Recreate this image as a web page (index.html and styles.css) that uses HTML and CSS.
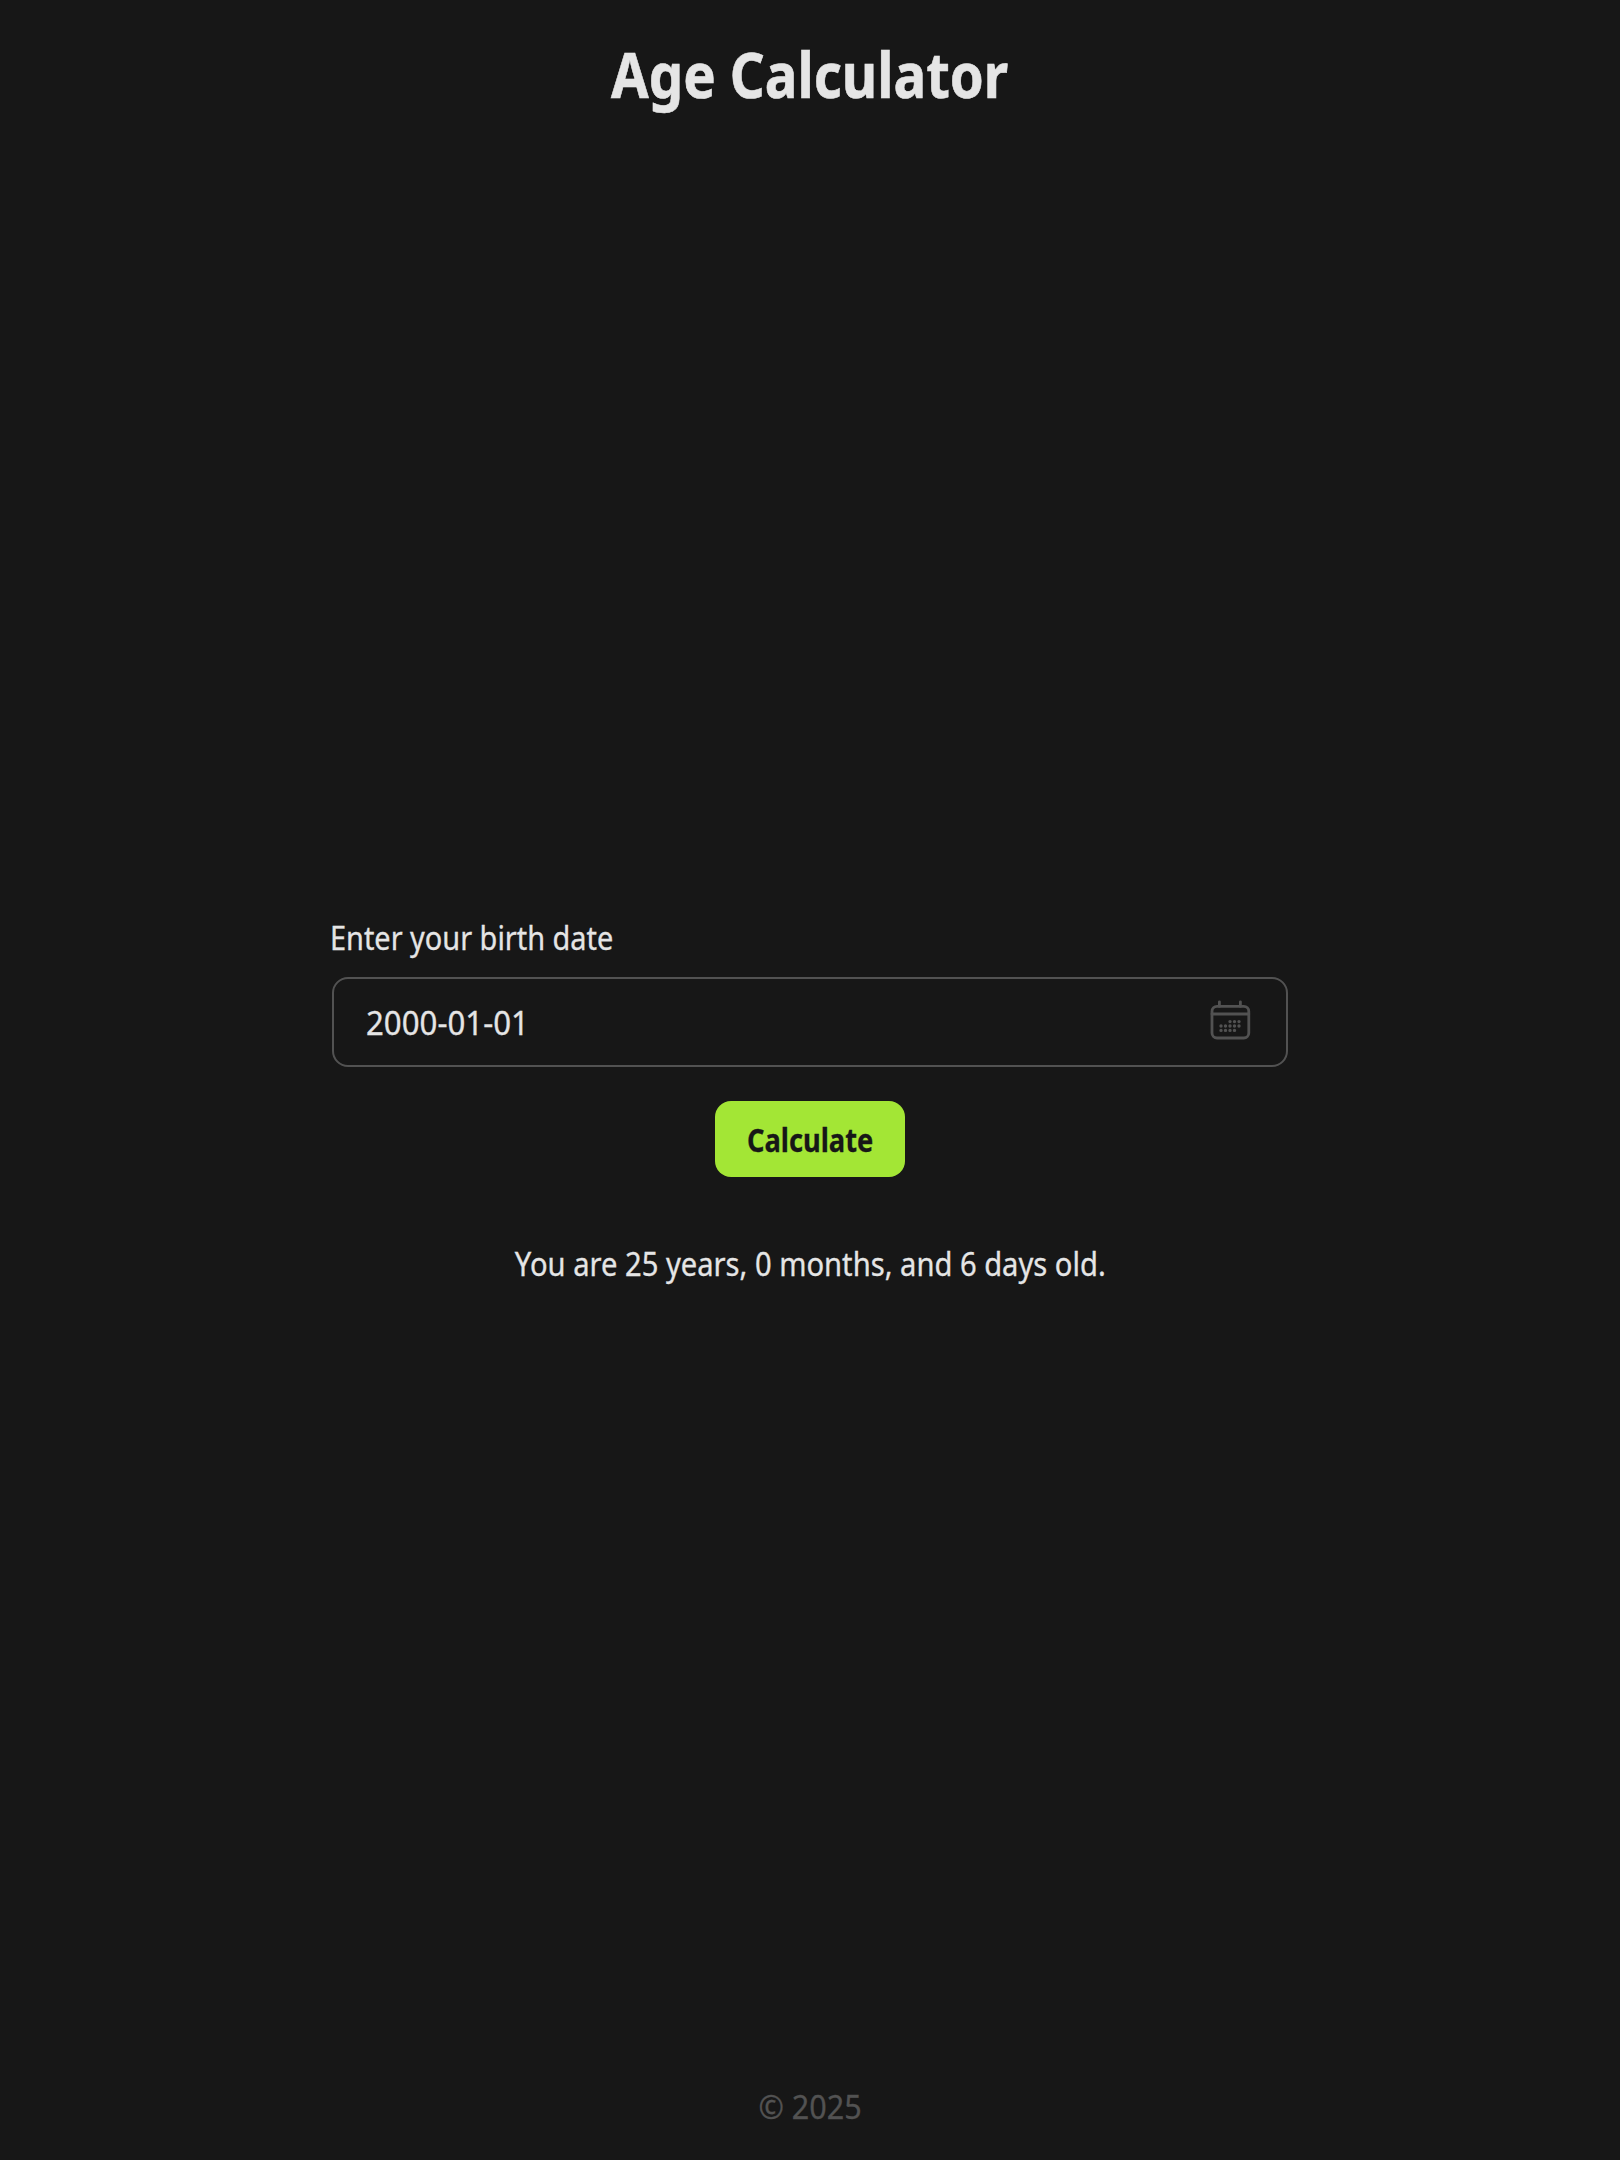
FILE: index.html
```
<!DOCTYPE html>
<html lang="en">
<head>
<meta charset="utf-8">
<title>Age Calculator</title>
<link rel="stylesheet" href="styles.css">
</head>
<body>
<header class="header"><h1 class="title">Age Calculator</h1></header>
<main class="main">
  <form class="form">
    <label class="label"><span class="label-text">Enter your birth date</span></label>
    <div class="field">
      <span class="date">2000-01-01</span>
      <svg class="calendar" viewBox="0 0 50 50" fill="none" stroke="currentColor" stroke-width="2.8" stroke-linecap="round">
        <rect x="7" y="11.4" width="36.8" height="31.6" rx="5"/>
        <path d="M7 19h36.8M14.4 6.8v4.6M35.4 6.8v4.6"/>
        <path stroke-width="3.4" d="M25 26.6h0M29.5 26.6h0M34 26.6h0M16 31h0M20.5 31h0M25 31h0M29.5 31h0M34 31h0M16 35.4h0M20.5 35.4h0M25 35.4h0M29.5 35.4h0"/>
      </svg>
    </div>
    <button class="button" type="button"><span class="button-text">Calculate</span></button>
    <p class="result">You are 25 years, 0 months, and 6 days old.</p>
  </form>
</main>
<footer class="footer"><span class="copyright">© 2025</span></footer>
</body>
</html>
```
FILE: styles.css
```
* { box-sizing: border-box; margin: 0; }
body {
  height: 2160px;
  display: flex;
  flex-direction: column;
  background: #171717;
  color: #e5e5e5;
  font: 32px/40px "Noto Sans", sans-serif;
  -webkit-text-stroke: 0.3px currentColor;
}
.header { height: 114px; padding-top: 33px; display: flex; justify-content: center; }
.title { font-size: 63px; line-height: 82px; font-weight: 700; transform: scaleX(.865); -webkit-text-stroke: 0.6px currentColor; }
.main { flex: 1; padding-top: 803px; }
.form { width: 960px; margin: 0 auto; display: flex; flex-direction: column; align-items: center; }
.label { width: 100%; height: 40px; padding-top: 1px; }
.label-text { display: inline-block; transform: scaleX(.903); transform-origin: left; }
.field {
  width: 956px;
  height: 90px;
  margin-top: 20px;
  padding: 0 32px;
  display: flex;
  align-items: center;
  justify-content: space-between;
  border: 2px solid #525252;
  border-radius: 16px;
}
.date { padding-top: 2px; transform: scaleX(.975); transform-origin: left; }
.calendar { width: 50px; height: 50px; margin: 0 -1px 4px 0; color: #525252; }
.button {
  width: 190px;
  height: 76px;
  margin-top: 34px;
  padding: 0;
  border: 0;
  border-radius: 16px;
  background: #a3e635;
  color: #171717;
  font: inherit;
  font-weight: 700;
}
.button-text { display: inline-block; padding-top: 1px; transform: scaleX(.853); }
.result { margin-top: 67px; transform: scaleX(.911); white-space: nowrap; }
.footer { height: 73px; display: flex; justify-content: center; color: #525252; }
.copyright { transform: scaleX(.955); }
```
